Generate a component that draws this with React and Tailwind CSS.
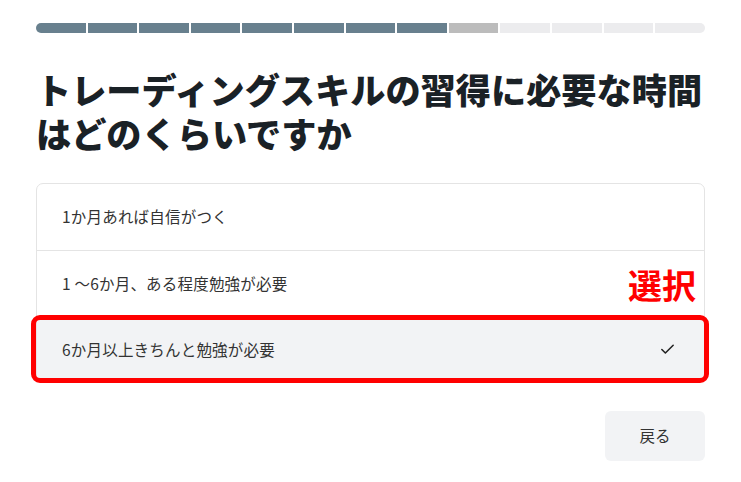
import { Check } from 'lucide-react';

const steps = Array.from({ length: 13 }, (_, i) => (i < 8 ? 'done' : i === 8 ? 'current' : 'todo'));

const options = ['1か月あれば自信がつく', '1 ～6か月、ある程度勉強が必要', '6か月以上きちんと勉強が必要'];

export default function App() {
  return (
    <div
      className="w-[741px] h-[482px] bg-white px-9 pt-[23px] text-[#333]"
      style={{ fontFamily: '"Noto Sans CJK JP", "Noto Sans", sans-serif' }}
    >
      {/* progress */}
      <div className="flex gap-[2px] h-[10px] rounded-full overflow-hidden">
        {steps.map((s, i) => (
          <div
            key={i}
            className={
              'flex-1 ' +
              (s === 'done' ? 'bg-[#68808e]' : s === 'current' ? 'bg-[#bcbcbc]' : 'bg-[#ececee]')
            }
          />
        ))}
      </div>

      <h1 className="mt-[34px] text-[35.2px] leading-[44px] font-black text-[#1a2126]">
        トレーディングスキルの習得に必要な時間はどのくらいですか
      </h1>

      <div className="relative mt-[28px] border border-[#e4e4e4] rounded-[7px]">
        {options.map((o, i) => {
          const selected = i === 2;
          return (
            <div
              key={o}
              className={
                'relative h-[66px] flex items-center justify-between pl-[25px] pr-[28px] text-[15.5px] tracking-[0.2px] ' +
                (i > 0 ? 'border-t border-[#e4e4e4] ' : '') +
                (selected ? 'bg-[#f2f3f5] rounded-b-[7px]' : '')
              }
            >
              <span>{o}</span>
              {selected && <Check size={17} strokeWidth={2.2} className="text-[#222]" />}
              {selected && (
                <div className="absolute -left-[6px] -right-[5px] -top-[2px] -bottom-[1px] border-[5px] border-[#ff0000] rounded-[9px]" />
              )}
            </div>
          );
        })}
        <span className="absolute right-[8px] top-[81px] text-[34px] leading-[40px] font-bold text-[#ff0000]">
          選択
        </span>
      </div>

      <div className="mt-[28px] flex justify-end">
        <button className="w-[100px] h-[50px] rounded-[6px] bg-[#f2f3f5] text-[15.5px] text-[#333]">戻る</button>
      </div>
    </div>
  );
}
